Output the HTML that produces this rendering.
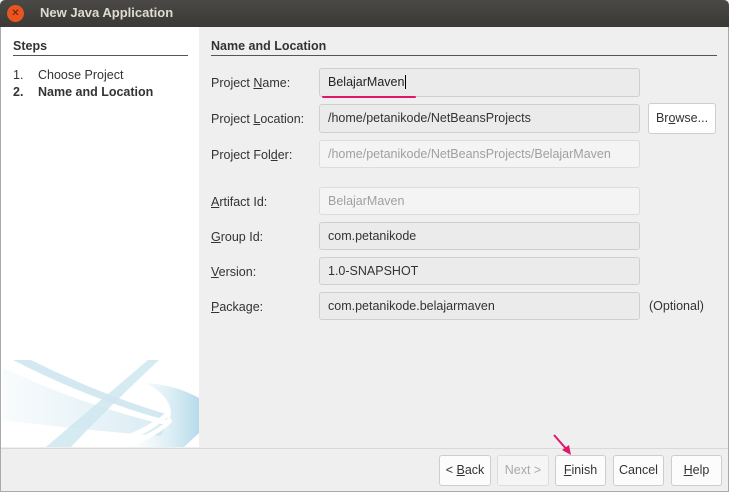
<!DOCTYPE html><html><head><style>
body{margin:0;width:729px;height:492px;overflow:hidden;font-family:"Liberation Sans",sans-serif;font-size:12.5px;color:#333;background:#efefef;position:relative}
.a{position:absolute}
.lab{position:absolute;left:211px}
.f{position:absolute;left:319px;width:321px;height:28px;border:1px solid #cfcfcf;border-radius:3px;background:#ebebeb;box-sizing:border-box;padding-left:8px;line-height:26px}
.d{background:#f4f4f4;color:#a0a0a0;border-color:#dcdcdc}
.b{position:absolute;top:455px;height:31px;border:1px solid #cdcdcd;border-radius:3px;background:#fcfcfc;box-sizing:border-box;text-align:center;line-height:29px}
u{text-decoration:underline}
</style></head><body>
<div class="a" style="left:0;top:0;width:729px;height:27px;background:linear-gradient(#4a4945,#3a3935);border-radius:5px 5px 0 0"></div>
<div class="a" style="left:7px;top:5px;width:17px;height:17px;border-radius:50%;background:#e9541f;color:#5a2010;font-size:10px;text-align:center;line-height:17px">✕</div>
<div class="a" style="left:40px;top:5px;color:#dfdbd2;font-weight:bold;font-size:13px">New Java Application</div>
<div class="a" style="left:0;top:27px;width:1px;height:465px;background:#aaa"></div>
<div class="a" style="right:0;top:27px;width:1px;height:465px;background:#aaa"></div>
<div class="a" style="left:0;top:491px;width:729px;height:1px;background:#aaa"></div>
<div class="a" style="left:1px;top:27px;width:198px;height:420px;background:#fff;overflow:hidden">
<svg width="198" height="107" style="position:absolute;left:0;top:313px">
<defs><linearGradient id="g" x1="0" x2="1"><stop offset="0" stop-color="#d5eaf2" stop-opacity="0"/><stop offset="1" stop-color="#b5dbea"/></linearGradient>
<linearGradient id="h" x1="0" x2="1"><stop offset="0" stop-color="#d5eaf2" stop-opacity=".2"/><stop offset="1" stop-color="#cfe6f0"/></linearGradient></defs>
<path d="M2 28 Q80 65 165 85 L160 96 Q80 90 2 80Z" fill="url(#h)" opacity=".8"/>
<path d="M12 20 L30 20 Q100 55 168 75 L165 80 Q90 60 12 20Z" fill="#d3e8f1"/>
<path d="M158 20 L147 20 Q100 60 45 107 L70 107 Q110 65 158 20Z" fill="#cfe6f0" opacity=".85"/>
<path d="M145 43 Q175 45 198 58 L198 93 L183 107 L130 107 Q170 90 170 72 Q168 55 145 43Z" fill="url(#g)"/>
<path d="M85 107 Q140 95 168 70 L170 74 Q145 98 105 107Z" fill="#fff"/>
<path d="M112 107 Q150 96 170 78 L171 82 Q155 98 125 107Z" fill="#fff"/>
</svg></div>
<div class="a" style="left:13px;top:39px;font-weight:bold;font-size:12.5px">Steps</div>
<div class="a" style="left:13px;top:55px;width:175px;height:1px;background:#555"></div>
<div class="a" style="left:13px;top:68px">1.</div><div class="a" style="left:38px;top:68px">Choose Project</div>
<div class="a" style="left:13px;top:85px;font-weight:bold">2.</div><div class="a" style="left:38px;top:85px;font-weight:bold">Name and Location</div>
<div class="a" style="left:211px;top:39px;font-weight:bold">Name and Location</div>
<div class="a" style="left:211px;top:55px;width:506px;height:1px;background:#555"></div>
<div class="lab" style="top:76px">Project <u>N</u>ame:</div>
<div class="lab" style="top:112px">Project <u>L</u>ocation:</div>
<div class="lab" style="top:148px">Project Fol<u>d</u>er:</div>
<div class="lab" style="top:195px"><u>A</u>rtifact Id:</div>
<div class="lab" style="top:230px"><u>G</u>roup Id:</div>
<div class="lab" style="top:265px"><u>V</u>ersion:</div>
<div class="lab" style="top:300px"><u>P</u>ackage:</div>
<div class="f" style="top:68px;height:29px;color:#222">BelajarMaven<span style="border-left:1px solid #000;margin-left:1px"></span></div>
<div class="a" style="left:322px;top:96px;width:94px;height:2px;background:#e0186c;border-radius:1px"></div>
<div class="f" style="top:104px;height:29px">/home/petanikode/NetBeansProjects</div>
<div class="b" style="left:648px;top:103px;width:68px;height:31px;background:#fff">Br<u>o</u>wse...</div>
<div class="f d" style="top:140px">/home/petanikode/NetBeansProjects/BelajarMaven</div>
<div class="f d" style="top:187px">BelajarMaven</div>
<div class="f" style="top:222px">com.petanikode</div>
<div class="f" style="top:257px">1.0-SNAPSHOT</div>
<div class="f" style="top:292px">com.petanikode.belajarmaven</div>
<div class="a" style="left:649px;top:299px">(Optional)</div>
<div class="a" style="left:1px;top:448px;width:727px;height:1px;background:#d8d8d8"></div>
<div class="b" style="left:439px;width:52px">&lt; <u>B</u>ack</div>
<div class="b" style="left:497px;width:52px;color:#aaa;background:#f5f5f5;border-color:#ddd">Next &gt;</div>
<div class="b" style="left:555px;width:51px"><u>F</u>inish</div>
<div class="b" style="left:613px;width:51px">Cancel</div>
<div class="b" style="left:671px;width:51px"><u>H</u>elp</div>
<svg class="a" style="left:550px;top:430px" width="30" height="30"><line x1="4" y1="5" x2="18" y2="21" stroke="#e0186c" stroke-width="2"/><path d="M21 25 L12 20 L19 15Z" fill="#e0186c"/></svg>
</body></html>
